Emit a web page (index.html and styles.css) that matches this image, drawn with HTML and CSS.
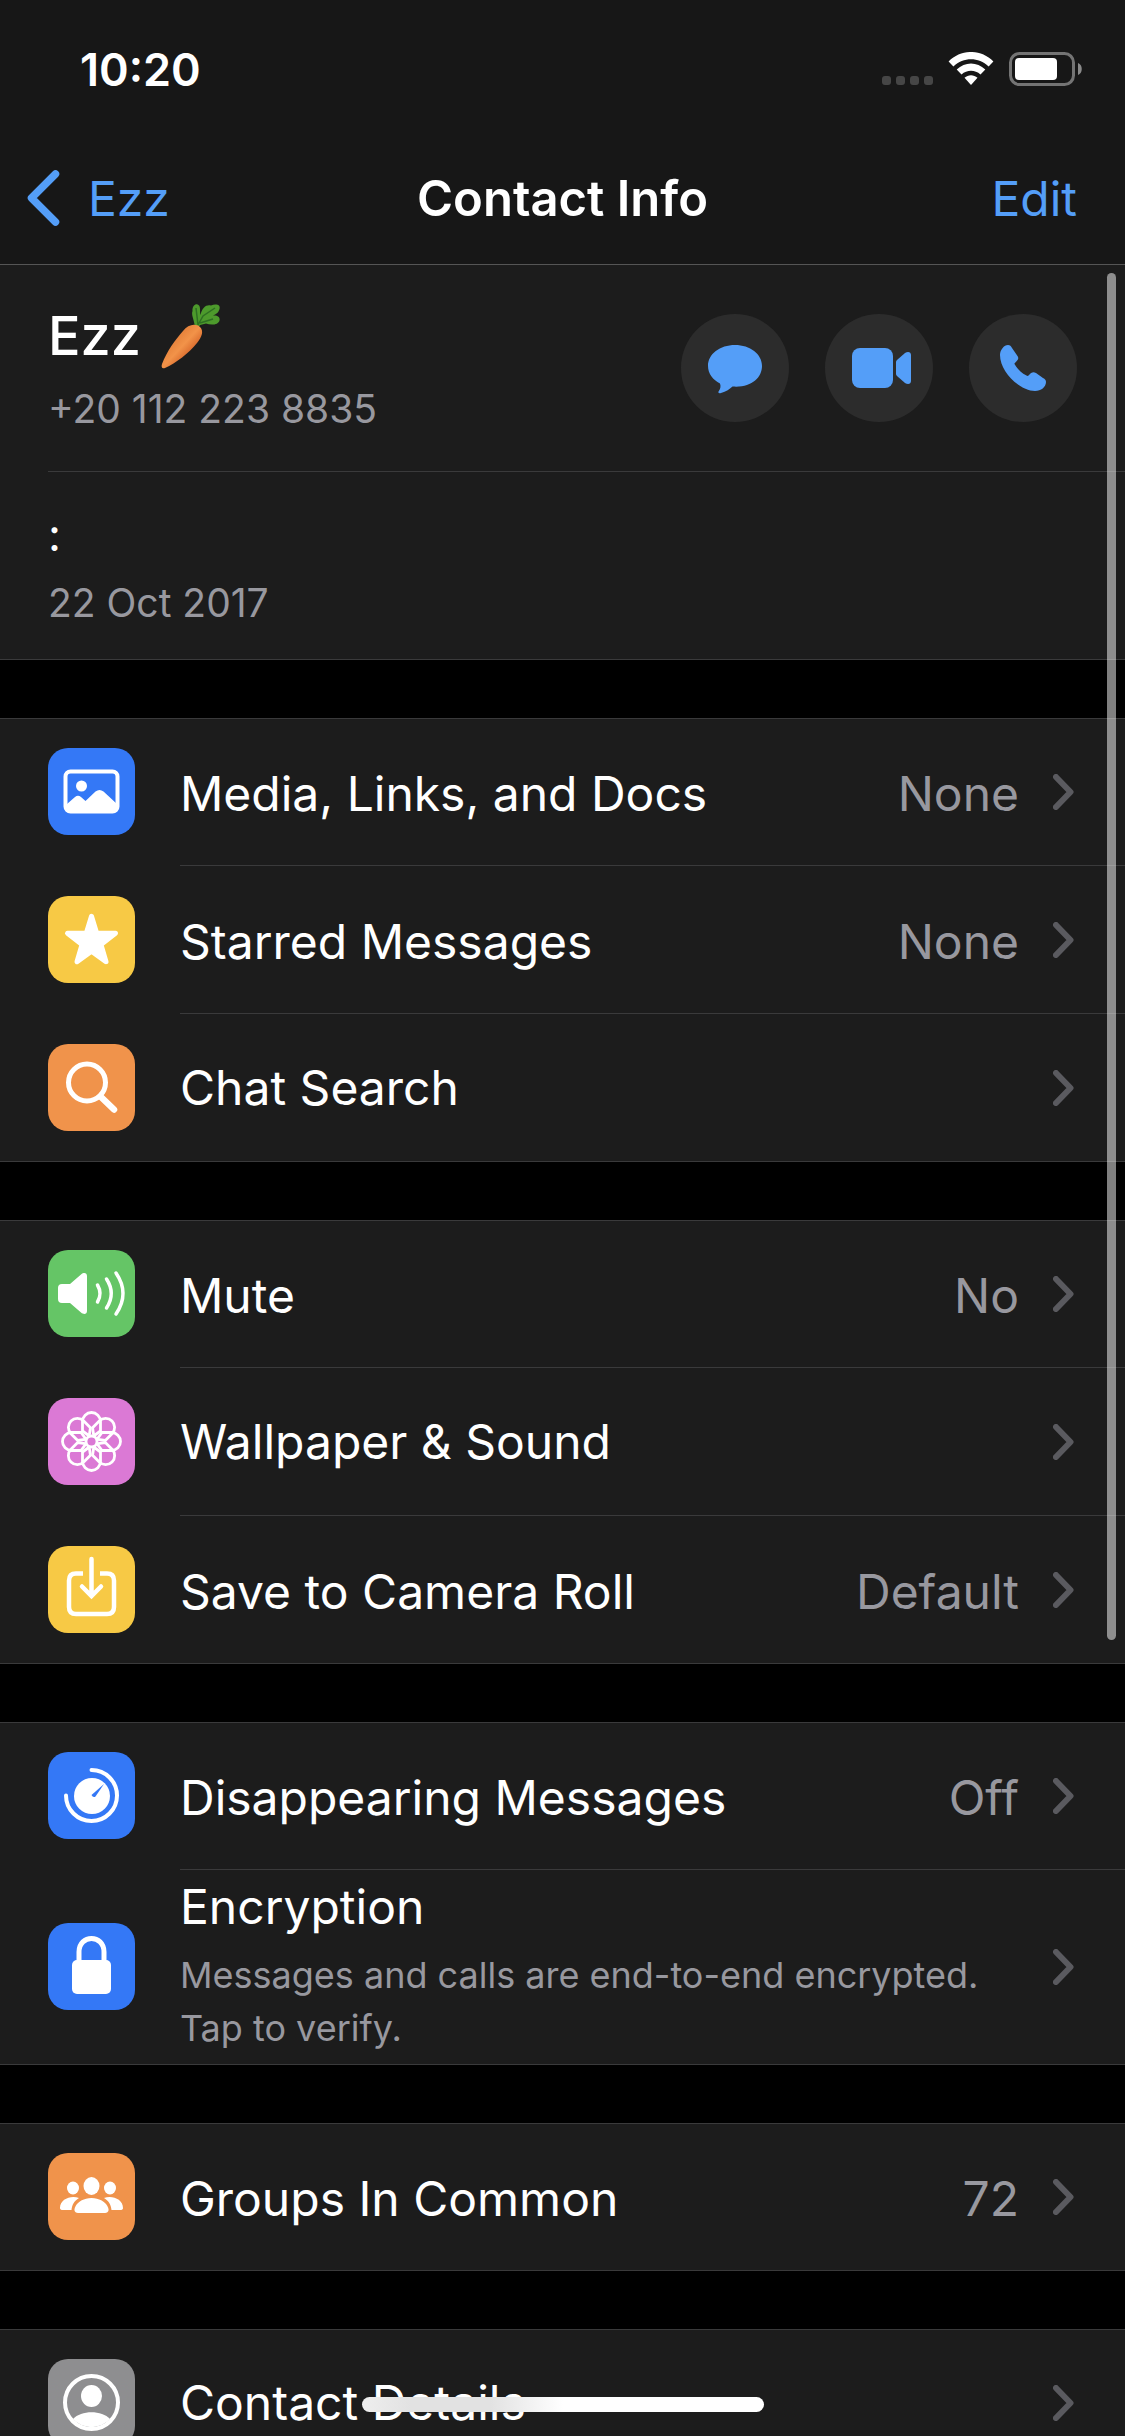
FILE: index.html
```html
<!DOCTYPE html>
<html lang="en">
<head>
<meta charset="utf-8">
<meta name="viewport" content="width=device-width, initial-scale=1">
<title>Contact Info</title>
<link rel="stylesheet" href="styles.css">
</head>
<body>
<svg class="defs" aria-hidden="true">
  <symbol id="chevron" viewBox="0 0 21 36"><path d="M3 3 17.500 18 3 33" fill="none" stroke="currentColor" stroke-width="6" stroke-linecap="round" stroke-linejoin="round"/></symbol>
</svg>
<div class="screen">
  <header class="top">
    <div class="status">
      <time class="clock">10:20</time>
      <div class="indicators">
        <svg width="51" height="34" viewBox="0 0 51 34" fill="#464646" role="img" aria-label="No signal"><rect y="24" width="9" height="9" rx="3"/><rect x="14" y="24" width="9" height="9" rx="3"/><rect x="28" y="24" width="9" height="9" rx="3"/><rect x="42" y="24" width="9" height="9" rx="3"/></svg>
        <svg width="46" height="34" viewBox="0 0 46 34" fill="#fff" role="img" aria-label="Wi-Fi"><path d="M.6 9.500C13-3.200 33-3.200 45.400 9.500L40.600 14.400C30.500 4.800 15.500 4.800 5.400 14.400Z"/><path d="M8.700 17.600C17 9.600 29 9.600 37.300 17.600L32.500 22.500C27 17.600 19 17.600 13.500 22.500Z"/><path d="M16.500 25.800C20.300 22.300 25.700 22.300 29.500 25.800L23 33Z"/></svg>
        <svg width="74" height="34" viewBox="0 0 74 34" role="img" aria-label="Battery"><rect x="1.500" y="1.500" width="63" height="31" rx="9" fill="none" stroke="#747474" stroke-width="3"/><rect x="6" y="6" width="42" height="22" rx="4" fill="#fff"/><path d="M69 11c5 1.500 5 10.500 0 12z" fill="#8a8a8a"/></svg>
      </div>
    </div>
    <nav class="nav">
      <a class="back" href="#chat"><svg width="34" height="56" viewBox="0 0 34 56" aria-hidden="true"><path d="M28.500 4 4.500 28 28.500 52" fill="none" stroke="currentColor" stroke-width="7.500" stroke-linecap="round" stroke-linejoin="round"/></svg>Ezz</a>
      <h1 class="title">Contact Info</h1>
      <button class="edit" type="button">Edit</button>
    </nav>
  </header>

  <main class="content">
    <section class="group">
      <div class="person">
        <div class="who">
          <h2 class="name">Ezz
            <svg class="carrot" viewBox="0 0 60 66" role="img" aria-label="carrot">
              <defs><linearGradient id="root" x1="0" y1="0" x2="1" y2="1"><stop offset=".25" stop-color="#e07a35"/><stop offset=".5" stop-color="#f29349"/><stop offset=".75" stop-color="#cf5a22"/></linearGradient></defs>
              <path d="M34 24C33 16 30 12 31.500 8 31 3 35 0 37.500 2 40 4 38.500 8 39.500 12 41 4 46 1 50 2.500 54 .5 60 1 58.500 6 57.500 10 55 11 52 12.500 56 12 59.500 14 58.500 17.500 57.500 22 50 22.500 45 20.500L39 22 36 26Z" fill="#4d9a2c"/>
              <path d="M37 22 42 13 54 5M39 20 52 16M35 5 37 22" fill="none" stroke="#2e6f22" stroke-width="1.500"/>
              <path d="M22 28C27 21 35 20 39 24 43 28 41 34 36 40 28 50 15 60 4 65 1 66 0 64 1 61 6 48 14 37 22 28Z" fill="url(#root)"/>
            </svg>
          </h2>
          <p class="detail">+20 112 223 8835</p>
        </div>
        <div class="actions">
          <button class="action" type="button" aria-label="Message"><svg viewBox="0 0 108 108" aria-hidden="true"><path d="M54 31C39 31 27 40 27 52 27 59.500 32 66 39 69.500 40 72 39.500 75 37.500 77.500 37 79 38 79.500 40 79 45 77.500 49 75 51.500 72.500 70 74 81 64 81 52 81 40 69 31 54 31Z"/></svg></button>
          <button class="action" type="button" aria-label="Video call"><svg viewBox="0 0 108 108" aria-hidden="true"><rect x="27" y="34" width="41" height="40" rx="8"/><path d="M72 46 80 39C83 37 86 38 86 41V67C86 70 83 71 80 69L72 62Q71 61 71 60V48Q71 47 72 46Z"/></svg></button>
          <button class="action" type="button" aria-label="Call"><svg viewBox="0 0 108 108" aria-hidden="true"><path d="M39 31C35 31 31 36 31 41 31 58 51 77 66 77 72 77 77 73 77 68 77 66 76 65 74 64L67 59C65 58 64 58 62 59L59.500 61.500C59 62 58 62 57.500 61.500 52 58.500 48 54.500 45.500 50 45.500 49 46 48.500 46.500 48.500L48.500 46C49.500 45 49.500 43.500 48.500 42L43 34C42 32 41 31 39 31Z"/></svg></button>
        </div>
      </div>
      <div class="about">
        <p class="about-text">:</p>
        <p class="detail">22 Oct 2017</p>
      </div>
    </section>

    <section class="group">
      <a class="row" href="#media">
        <svg class="icon blue" viewBox="0 0 87 87" aria-hidden="true"><rect x="17.500" y="23.500" width="52" height="40" rx="5" fill="none" stroke="#fff" stroke-width="4"/><circle cx="33.500" cy="38" r="5.500"/><path d="M19 56 27 49Q30 46.500 33 49L37.500 53 47.500 43.500Q51.500 40.500 55.500 43.500L69 56V61Q69 64 66 64H22Q19 64 19 61Z"/></svg>
        <span class="line"><span class="label">Media, Links, and Docs</span><span class="value">None</span><svg class="chevron" aria-hidden="true"><use href="#chevron"/></svg></span>
      </a>
      <a class="row" href="#starred">
        <svg class="icon yellow" viewBox="0 0 87 87" aria-hidden="true"><path d="M43.500 20.300 48.700 37.300 67.500 37.300 53 48.600 58 65.700 43.500 55.200 29 65.700 34 48.600 19.500 37.300 38.300 37.300Z" stroke="#fff" stroke-width="5" stroke-linejoin="round"/></svg>
        <span class="line"><span class="label">Starred Messages</span><span class="value">None</span><svg class="chevron" aria-hidden="true"><use href="#chevron"/></svg></span>
      </a>
      <a class="row" href="#search">
        <svg class="icon orange" viewBox="0 0 87 87" aria-hidden="true"><g fill="none" stroke="#fff" stroke-linecap="round"><circle cx="39" cy="38.500" r="18.500" stroke-width="5"/><path d="m53 53 13 12.500" stroke-width="6.500"/></g></svg>
        <span class="line"><span class="label">Chat Search</span><svg class="chevron" aria-hidden="true"><use href="#chevron"/></svg></span>
      </a>
    </section>

    <section class="group">
      <a class="row" href="#mute">
        <svg class="icon green" viewBox="0 0 87 87" aria-hidden="true"><path d="M14 34H22L33 24.500C36 22 39 23 39 26V61C39 64 36 65 33 62.500L22 53H14Q10 53 10 49V38Q10 34 14 34Z"/><g fill="none" stroke="#fff" stroke-width="3.500" stroke-linecap="round"><path d="M49.500 35Q54.500 43.500 49.500 52M58.500 29Q68 43.500 58.500 58M68 23Q82 43.500 68 64"/></g></svg>
        <span class="line"><span class="label">Mute</span><span class="value">No</span><svg class="chevron" aria-hidden="true"><use href="#chevron"/></svg></span>
      </a>
      <a class="row" href="#wallpaper">
        <svg class="icon pink" viewBox="0 0 87 87" aria-hidden="true"><defs><path id="petal" d="M42 38.500 34.500 33V23.500A9 9 0 0 1 52.500 23.500V33L45 38.500"/></defs><g fill="none" stroke="#fff" stroke-width="2.800"><use href="#petal"/><use href="#petal" transform="rotate(45 43.500 43.500)"/><use href="#petal" transform="rotate(90 43.500 43.500)"/><use href="#petal" transform="rotate(135 43.500 43.500)"/><use href="#petal" transform="rotate(180 43.500 43.500)"/><use href="#petal" transform="rotate(225 43.500 43.500)"/><use href="#petal" transform="rotate(270 43.500 43.500)"/><use href="#petal" transform="rotate(315 43.500 43.500)"/><circle cx="43.500" cy="43.500" r="5.500"/></g></svg>
        <span class="line"><span class="label">Wallpaper &amp; Sound</span><svg class="chevron" aria-hidden="true"><use href="#chevron"/></svg></span>
      </a>
      <a class="row" href="#save">
        <svg class="icon yellow" viewBox="0 0 87 87" aria-hidden="true"><g fill="none" stroke="#fff" stroke-width="4.500"><path d="M35 27.500H28Q21 27.500 21 34.500V61Q21 68 28 68H59Q66 68 66 61V34.500Q66 27.500 59 27.500H52"/><path d="M43.500 13V49M34 40.500 43.500 50 53 40.500" stroke-linecap="round"/></g></svg>
        <span class="line"><span class="label">Save to Camera Roll</span><span class="value">Default</span><svg class="chevron" aria-hidden="true"><use href="#chevron"/></svg></span>
      </a>
    </section>

    <section class="group">
      <a class="row" href="#disappearing">
        <svg class="icon blue" viewBox="0 0 87 87" aria-hidden="true"><path d="M43.500 18A25.500 25.500 0 1 1 18 43.500" fill="none" stroke="#fff" stroke-width="4" stroke-linecap="round"/><circle cx="44" cy="44" r="18"/><path d="M56 32 47.500 44.500Q45 46 43.500 43Z" fill="#3478f6"/></svg>
        <span class="line"><span class="label">Disappearing Messages</span><span class="value">Off</span><svg class="chevron" aria-hidden="true"><use href="#chevron"/></svg></span>
      </a>
      <a class="row" href="#encryption">
        <svg class="icon blue" viewBox="0 0 87 87" aria-hidden="true"><rect x="24" y="37" width="39" height="34" rx="5"/><path d="M31 38V29C31 11 56 11 56 29V38" fill="none" stroke="#fff" stroke-width="5"/></svg>
        <span class="line"><span class="label two-line">Encryption<span class="note">Messages and calls are end-to-end encrypted. Tap to verify.</span></span><svg class="chevron" aria-hidden="true"><use href="#chevron"/></svg></span>
      </a>
    </section>

    <section class="group">
      <a class="row" href="#groups">
        <svg class="icon orange" viewBox="0 0 87 87" aria-hidden="true"><ellipse cx="43.500" cy="33" rx="8" ry="9"/><ellipse cx="25" cy="35" rx="6" ry="6.500"/><ellipse cx="62" cy="35" rx="6" ry="6.500"/><path d="M30 60C22 60 28 45 43.500 45S65 60 57 60Z"/><path d="M12 55C12 46 23 42 31 45 26 48 24 52 23.500 57H15Q12 57 12 55ZM75 55C75 46 64 42 56 45 61 48 63 52 63.500 57H72Q75 57 75 55Z"/></svg>
        <span class="line"><span class="label">Groups In Common</span><span class="value">72</span><svg class="chevron" aria-hidden="true"><use href="#chevron"/></svg></span>
      </a>
    </section>

    <section class="group">
      <a class="row" href="#details">
        <svg class="icon gray" viewBox="0 0 87 87" aria-hidden="true"><circle cx="43.500" cy="43.500" r="26.500" fill="none" stroke="#fff" stroke-width="4"/><ellipse cx="43.500" cy="37" rx="10.500" ry="11"/><path d="M25 60C33 51 54 51 62 60A25 25 0 0 1 25 60Z"/></svg>
        <span class="line"><span class="label">Contact Details</span><svg class="chevron" aria-hidden="true"><use href="#chevron"/></svg></span>
      </a>
    </section>
  </main>
  <div class="scroll-thumb"></div>
  <div class="home-bar"></div>
</div>
</body>
</html>
```
FILE: styles.css
```css
* { box-sizing: border-box; }

body {
  margin: 0;
  background: #000;
  color: #fff;
  font-family: Inter, "Liberation Sans", sans-serif;
  font-size: 48px;
}

h1, h2, p { margin: 0; font: inherit; }
a { color: inherit; text-decoration: none; }
button { border: 0; padding: 0; background: none; color: inherit; font: inherit; }
svg { display: block; flex: none; }
.defs { position: absolute; width: 0; height: 0; }

.screen {
  position: relative;
  display: flex;
  flex-direction: column;
  height: 100vh;
  overflow: hidden;
}

/* Status bar and navigation */
.top {
  flex: none;
  background: #171717;
  border-bottom: 1px solid #555;
}

.status {
  display: flex;
  justify-content: space-between;
  align-items: center;
  height: 132px;
  padding: 6px 42px 0 80px;
}
.clock { font-size: 45px; font-weight: 600; }
.indicators { display: flex; gap: 15px; }

.nav {
  display: grid;
  grid-template-columns: 1fr auto 1fr;
  align-items: center;
  height: 132px;
  padding: 0 27px;
}
.back, .edit { color: #549ef8; }
.back { display: flex; align-items: center; gap: 27px; }
.title { font-size: 49px; font-weight: 600; }
.edit { justify-self: end; padding-right: 21px; }

/* Scrolling list */
.content {
  flex: 1;
  min-height: 0;
  overflow-y: auto;
  scrollbar-width: none;
  display: flex;
  flex-direction: column;
  gap: 58px;
}

.group {
  flex: none;
  background: #1c1c1c;
  box-shadow: inset 0 1px #3a3a3b;
  border-bottom: 1px solid #3a3a3b;
}
.group:first-child { box-shadow: none; }

.person {
  display: flex;
  align-items: center;
  justify-content: space-between;
  min-height: 207px;
  margin-left: 48px;
  padding-right: 48px;
  border-bottom: 1px solid #3a3a3b;
}
.who { padding-top: 7px; }
.name {
  display: flex;
  align-items: center;
  gap: 20px;
  font-size: 54px;
  font-weight: 500;
  line-height: 74px;
}
.carrot { width: 60px; height: 66px; }
.detail { color: #98989f; font-size: 39px; line-height: 72px; }
.actions { display: flex; gap: 36px; }
.action {
  width: 108px;
  height: 108px;
  border-radius: 50%;
  background: #2c2c2c;
}
.action svg { fill: #549ef8; }

.about { padding: 30px 48px 20px; }
.about-text { font-size: 45px; line-height: 65px; }

.row { display: flex; align-items: center; padding-left: 48px; }
.icon { width: 87px; height: 87px; margin-bottom: 1px; border-radius: 20px; fill: #fff; }
.blue { background: #3478f6; }
.yellow { background: #f7c945; }
.orange { background: #f0934b; }
.green { background: #65c566; }
.pink { background: #db79d5; }
.gray { background: #8e8e90; }

.line {
  flex: 1;
  display: flex;
  align-items: center;
  min-height: 148px;
  margin-left: 45px;
  padding-right: 51px;
  border-bottom: 1px solid #3a3a3b;
}
.row:last-child .line { border-bottom: 0; min-height: 147px; }
.label { flex: 1; }
.label:has(+ .value), .value { padding-top: 4px; }
.value { color: #98989f; }
.chevron { width: 21px; height: 36px; margin-left: 34px; color: #5a5a5f; }
.two-line { padding: 4px 0 9px; line-height: 66px; }
.note { display: block; margin-top: 9px; color: #98989f; font-size: 36px; line-height: 53px; }

/* Overlays */
.scroll-thumb {
  position: absolute;
  top: 273px;
  right: 9px;
  bottom: 796px;
  width: 9px;
  border-radius: 5px;
  background: rgba(255, 255, 255, .5);
}
.home-bar {
  position: absolute;
  bottom: 24px;
  left: 50%;
  width: 402px;
  height: 15px;
  margin-left: -201px;
  border-radius: 8px;
  background: linear-gradient(90deg, #eee, #e2e2e2 12%, #e2e2e2 32%, #fff 50%);
}
```
